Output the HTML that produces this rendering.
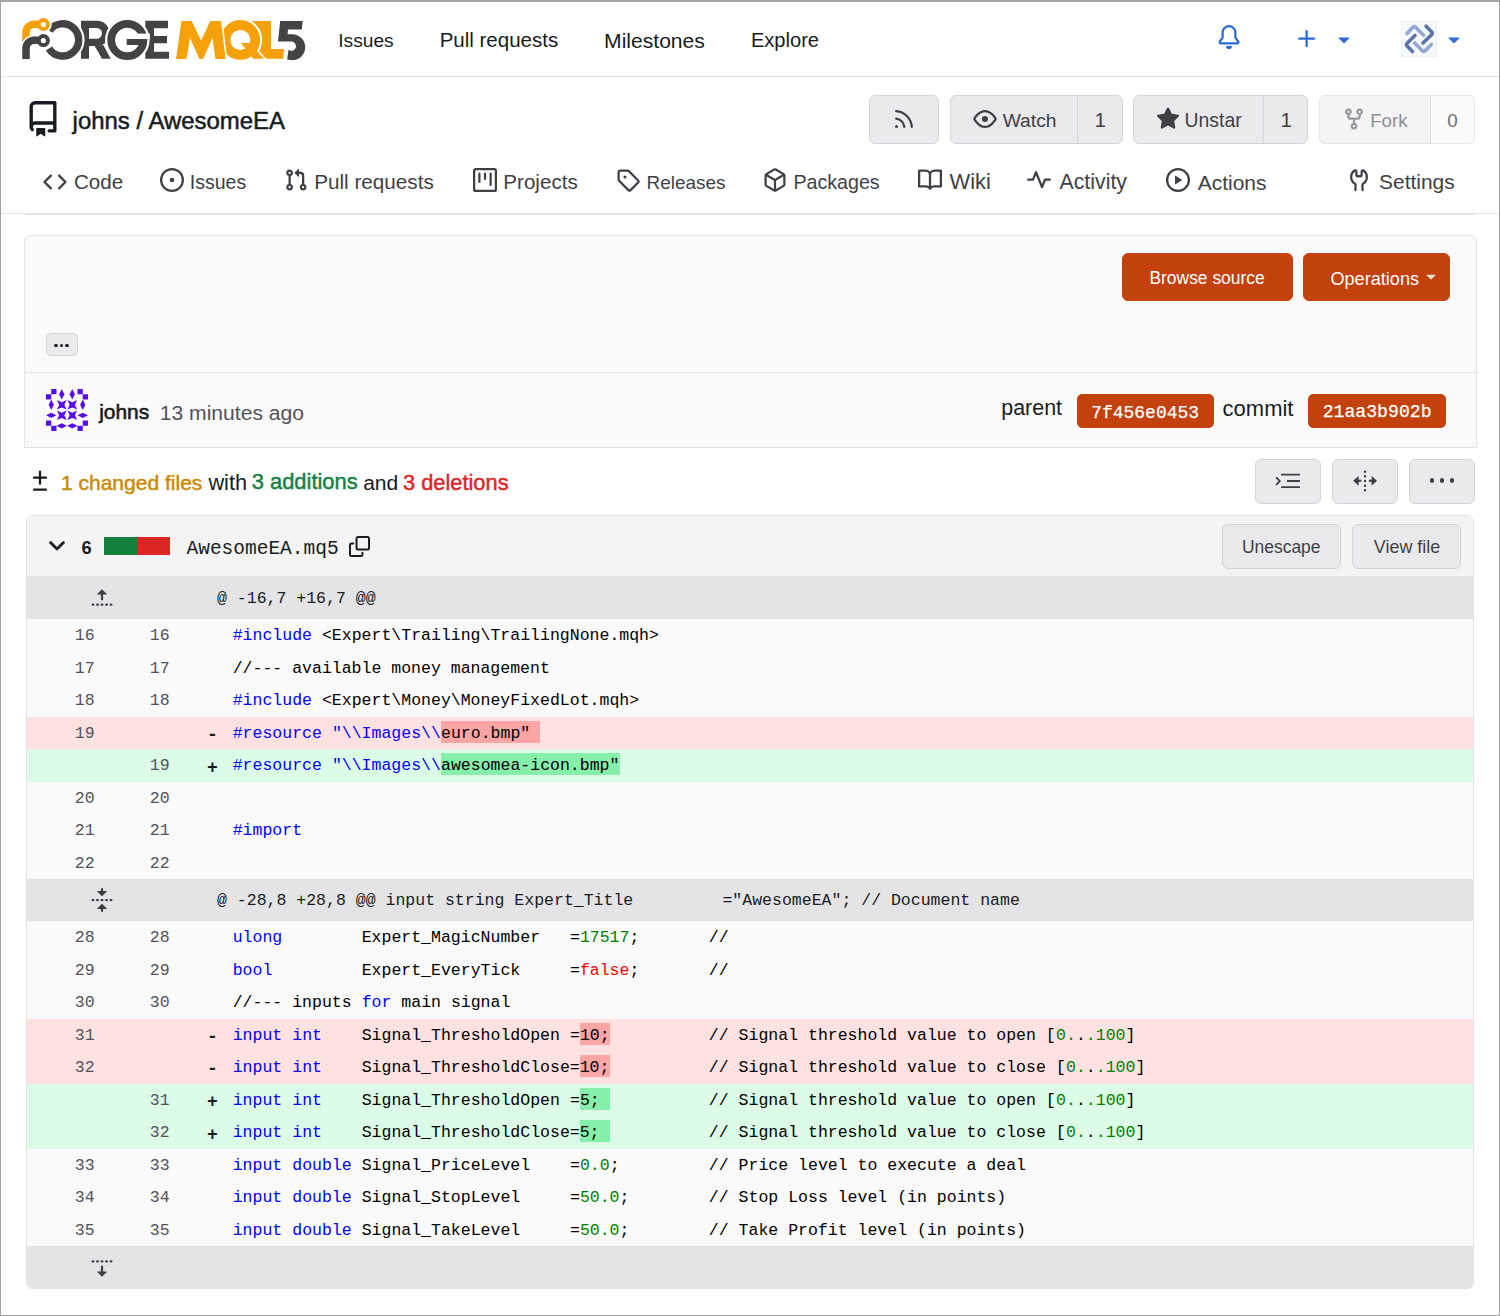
<!DOCTYPE html>
<html><head><meta charset="utf-8"><style>
html,body{margin:0;padding:0;background:#fff;}
body{width:1500px;height:1316px;position:relative;overflow:hidden;font-family:'Liberation Sans', sans-serif;}
.t{position:absolute;white-space:pre;line-height:1;}
</style></head><body>
<div style="position:absolute;left:0px;top:0px;width:1500px;height:1316px;box-sizing:border-box;border:1px solid #a0a0a0;border-top:2px solid #a4a4a4;z-index:50;pointer-events:none"></div>
<div style="position:absolute;left:1px;top:76px;width:1498px;height:1px;background:#e2e2e5"></div>
<svg style="position:absolute;left:0;top:0" width="320" height="76" viewBox="0 0 320 76">
<g fill="#454341">
<path d="M145.3 20.7H168V28.3H154V36H167V43.3H154V51.7H169V58.7H145.3Z"/>
<path d="M81 20.7H97.05A12.65 12.65 0 0 1 97.05 46H89V38.7H96.65A5.35 5.35 0 0 0 96.65 28H89V58.7H81Z"/>
<path d="M94.7 46L103.3 45L110.7 58.7L102 58.7Z"/>
</g>
<circle cx="127.3" cy="40" r="22.3" fill="#fff"/>
<circle cx="127.3" cy="40" r="16.1" fill="none" stroke="#454341" stroke-width="7.8"/>
<rect x="136" y="33.6" width="14" height="5.4" fill="#fff"/>
<rect x="126.7" y="39" width="20" height="6" fill="#454341"/>
<circle cx="62.6" cy="39.9" r="22.0" fill="#fff"/>
<path d="M49.41 30.67 A16.1 16.1 0 1 1 48.95 48.43" fill="none" stroke="#454341" stroke-width="7.4"/>
<circle cx="43.4" cy="24.5" r="8.3" fill="#fff"/>
<circle cx="43.4" cy="40.6" r="8.3" fill="#fff"/>
<path d="M26 44 V32.5 A8.25 8.25 0 0 1 34.25 24.25 H38" fill="none" stroke="#f7a10a" stroke-width="7.5"/>
<circle cx="43.4" cy="24.5" r="4.55" fill="none" stroke="#f7a10a" stroke-width="3.9"/>
<path d="M26 59 V48.5 A8.25 8.25 0 0 1 34.25 40.25 H43.4" fill="none" stroke="#fff" stroke-width="10.5"/>
<path d="M26 59.2 V48.5 A8.25 8.25 0 0 1 34.25 40.25 H38" fill="none" stroke="#454341" stroke-width="7.5"/>
<circle cx="43.4" cy="40.6" r="4.55" fill="none" stroke="#454341" stroke-width="3.9"/>
<rect x="20" y="59.2" width="12" height="4" fill="#fff"/>
<path fill="#f7a10a" d="M260.6 21.1H271V49.1H284L283.3 58.7H250V21.1Z"/>
<circle cx="240.3" cy="39.9" r="21.9" fill="#fff"/>
<path d="M241 43.1L249.8 43.1L264 58.7L253.3 58.7Z" fill="#fff" stroke="#fff" stroke-width="3.2"/>
<circle cx="240.3" cy="39.9" r="14.9" fill="none" stroke="#f7a10a" stroke-width="9.8"/>
<path d="M241 43.1L249.8 43.1L264 58.7L253.3 58.7Z" fill="#f7a10a"/>
<path d="M176.1 59L181.4 21L191.6 21L201.2 40.6L210.3 21L221 21L225.6 59L215.4 59L212.6 37.8L203 59L199.5 59L189.9 37.8L186.5 59Z" fill="#fff" stroke="#fff" stroke-width="3.2"/>
<path d="M176.1 59L181.4 21L191.6 21L201.2 40.6L210.3 21L221 21L225.6 59L215.4 59L212.6 37.8L203 59L199.5 59L189.9 37.8L186.5 59Z" fill="#f7a10a"/>
<path fill="#454341" d="M280.2 21.1L302.7 21.1L301.8 29.5L288.1 29.5L287.5 34.3L292.2 34.3A13 13 0 0 1 292.2 60.3L287.2 59.6L288.5 49.8L291.3 51A4.7 4.7 0 0 0 291.3 41.6L278 41.6Z"/>
<rect x="0" y="60.3" width="320" height="8" fill="#fff"/>
</svg>
<div class="t" style="left:338.27px;top:31.27px;font-size:19.17px;color:#181c21;font-weight:400;font-family:'Liberation Sans', sans-serif;">Issues</div>
<div class="t" style="left:439.66px;top:30.14px;font-size:20.51px;color:#181c21;font-weight:400;font-family:'Liberation Sans', sans-serif;">Pull requests</div>
<div class="t" style="left:604.11px;top:29.64px;font-size:21.09px;color:#181c21;font-weight:400;font-family:'Liberation Sans', sans-serif;">Milestones</div>
<div class="t" style="left:750.89px;top:30.46px;font-size:20.13px;color:#181c21;font-weight:400;font-family:'Liberation Sans', sans-serif;">Explore</div>
<svg style="position:absolute;left:1216.7px;top:24.7px;" width="24" height="24" viewBox="0 0 16 16"><path fill="#2d6bd6" d="M8 16a2 2 0 0 0 1.985-1.75c.017-.137-.097-.25-.235-.25h-3.5c-.138 0-.252.113-.235.25A2 2 0 0 0 8 16ZM3 5a5 5 0 0 1 10 0v2.947c0 .05.015.098.042.139l1.703 2.555A1.519 1.519 0 0 1 13.482 13H2.518a1.516 1.516 0 0 1-1.263-2.36l1.703-2.554A.255.255 0 0 0 3 7.947Zm5-3.5A3.5 3.5 0 0 0 4.5 5v2.947c0 .346-.102.683-.294.97l-1.703 2.556a.017.017 0 0 0-.003.01l.001.006c0 .002.002.004.004.006l.006.004.007.001h10.964l.007-.001.006-.004.004-.006.001-.007a.017.017 0 0 0-.003-.01l-1.703-2.554a1.745 1.745 0 0 1-.294-.97V5A3.5 3.5 0 0 0 8 1.5Z"/></svg>
<svg style="position:absolute;left:1294.6px;top:27px;" width="24" height="24" viewBox="0 0 16 16"><path fill="#2d6bd6" d="M7.75 2a.75.75 0 0 1 .75.75V7h4.25a.75.75 0 0 1 0 1.5H8.5v4.25a.75.75 0 0 1-1.5 0V8.5H2.75a.75.75 0 0 1 0-1.5H7V2.75A.75.75 0 0 1 7.75 2Z"/></svg>
<svg style="position:absolute;left:1332.2px;top:26.5px;" width="24" height="24" viewBox="0 0 16 16"><path fill="#2d6bd6" d="m4.427 7.427 3.396 3.396a.25.25 0 0 0 .354 0l3.396-3.396A.25.25 0 0 0 11.396 7H4.604a.25.25 0 0 0-.177.427Z"/></svg>
<svg style="position:absolute;left:1441.9px;top:26.5px;" width="24" height="24" viewBox="0 0 16 16"><path fill="#2d6bd6" d="m4.427 7.427 3.396 3.396a.25.25 0 0 0 .354 0l3.396-3.396A.25.25 0 0 0 11.396 7H4.604a.25.25 0 0 0-.177.427Z"/></svg>
<svg style="position:absolute;left:1401px;top:21px" width="36" height="36" viewBox="1401 21 36 36">
<rect x="1401.5" y="21.5" width="35" height="35" fill="#f7f8fa" stroke="#eef0f3" stroke-width="1"/>
<g fill="none" stroke-linecap="round" stroke-linejoin="round" stroke-width="3.6">
<path d="M1407 33.5 L1413 27.2 Q1414.3 26 1415.6 27.2 L1423.6 35.2" stroke="#94a8d3"/>
<path d="M1426 26.2 L1431.3 31.5 Q1433 33.3 1431.3 35 L1423 43" stroke="#5a74ae"/>
<path d="M1415 35.5 L1407.3 43 Q1405.8 44.6 1407.3 46.2 L1412.5 51.5" stroke="#5a74ae"/>
<path d="M1414.6 43 L1422.3 50.8 Q1423.7 52.2 1425.1 50.8 L1431.3 44.5" stroke="#94a8d3"/>
</g></svg>
<svg style="position:absolute;left:24.5px;top:100.5px;" width="36" height="36" viewBox="0 0 16 16"><path fill="#181c21" d="M2 2.5A2.5 2.5 0 0 1 4.5 0h8.75a.75.75 0 0 1 .75.75v12.5a.75.75 0 0 1-.75.75h-2.5a.75.75 0 0 1 0-1.5h1.75v-2h-8a1 1 0 0 0-.714 1.7.75.75 0 1 1-1.072 1.05A2.495 2.495 0 0 1 2 11.5Zm10.5-1h-8a1 1 0 0 0-1 1v6.708A2.486 2.486 0 0 1 4.5 9h8ZM5 12.25a.25.25 0 0 1 .25-.25h3.5a.25.25 0 0 1 .25.25v3.25a.25.25 0 0 1-.4.2l-1.45-1.087a.249.249 0 0 0-.3 0L5.4 15.7a.25.25 0 0 1-.4-.2Z"/></svg>
<div class="t" style="left:72.60px;top:109.23px;font-size:23.94px;color:#181c21;font-weight:400;font-family:'Liberation Sans', sans-serif;-webkit-text-stroke:0.5px #181c21;">johns / AwesomeEA</div>
<div style="position:absolute;left:869px;top:95px;width:70px;height:49px;box-sizing:border-box;background:#eaeaed;border:1px solid #d4d4d8;border-radius:6px;"></div>
<svg style="position:absolute;left:891.8px;top:106.8px;" width="24" height="24" viewBox="0 0 16 16"><path fill="#3f3f46" d="M2.002 2.725a.75.75 0 0 1 .797-.699C8.79 2.42 13.58 7.21 13.974 13.201a.75.75 0 0 1-1.497.098 10.502 10.502 0 0 0-9.776-9.776.747.747 0 0 1-.7-.798ZM2.84 7.05h-.002a7.002 7.002 0 0 1 6.113 6.111.75.75 0 0 1-1.49.178 5.503 5.503 0 0 0-4.8-4.8.75.75 0 0 1 .179-1.489ZM2 13a1 1 0 1 1 2 0 1 1 0 0 1-2 0Z"/></svg>
<div style="position:absolute;left:950px;top:95px;width:173px;height:49px;box-sizing:border-box;background:#eaeaed;border:1px solid #d4d4d8;border-radius:6px;"></div>
<div style="position:absolute;left:1077px;top:95px;width:1px;height:49px;background:#d4d4d8"></div>
<svg style="position:absolute;left:972.7px;top:106.7px;" width="24" height="24" viewBox="0 0 16 16"><path fill="#3f3f46" d="M8 2c1.981 0 3.671.992 4.933 2.078 1.27 1.091 2.187 2.345 2.637 3.023a1.62 1.62 0 0 1 0 1.798c-.45.678-1.367 1.932-2.637 3.023C11.67 13.008 9.981 14 8 14c-1.981 0-3.671-.992-4.933-2.078C1.797 10.83.88 9.576.43 8.898a1.62 1.62 0 0 1 0-1.798c.45-.677 1.367-1.931 2.637-3.022C4.33 2.992 6.019 2 8 2ZM1.679 7.932a.12.12 0 0 0 0 .136c.411.622 1.241 1.75 2.366 2.717C5.176 11.758 6.527 12.5 8 12.5c1.473 0 2.825-.742 3.955-1.715 1.124-.967 1.954-2.096 2.366-2.717a.12.12 0 0 0 0-.136c-.412-.621-1.242-1.75-2.366-2.717C10.824 4.242 9.473 3.5 8 3.5c-1.473 0-2.825.742-3.955 1.715-1.124.967-1.954 2.096-2.366 2.717ZM8 10a2 2 0 1 1-.001-3.999A2 2 0 0 1 8 10Z"/></svg>
<div class="t" style="left:1002.70px;top:110.72px;font-size:19.23px;color:#3f3f46;font-weight:400;font-family:'Liberation Sans', sans-serif;">Watch</div>
<div class="t" style="left:1094.46px;top:109.65px;font-size:20.50px;color:#3f3f46;font-weight:400;font-family:'Liberation Sans', sans-serif;">1</div>
<div style="position:absolute;left:1133px;top:95px;width:175px;height:49px;box-sizing:border-box;background:#eaeaed;border:1px solid #d4d4d8;border-radius:6px;"></div>
<div style="position:absolute;left:1263px;top:95px;width:1px;height:49px;background:#d4d4d8"></div>
<svg style="position:absolute;left:1156.2px;top:106.5px;" width="24" height="24" viewBox="0 0 16 16"><path fill="#3f3f46" d="M8 .25a.75.75 0 0 1 .673.418l1.882 3.815 4.21.612a.75.75 0 0 1 .416 1.279l-3.046 2.97.719 4.192a.751.751 0 0 1-1.088.791L8 12.347l-3.766 1.98a.75.75 0 0 1-1.088-.79l.72-4.194L.818 6.374a.75.75 0 0 1 .416-1.28l4.21-.611L7.327.668A.75.75 0 0 1 8 .25Z"/></svg>
<div class="t" style="left:1184.55px;top:110.59px;font-size:19.39px;color:#3f3f46;font-weight:400;font-family:'Liberation Sans', sans-serif;">Unstar</div>
<div class="t" style="left:1280.46px;top:109.65px;font-size:20.50px;color:#3f3f46;font-weight:400;font-family:'Liberation Sans', sans-serif;">1</div>
<div style="position:absolute;left:1319px;top:95px;width:156px;height:49px;box-sizing:border-box;background:#f4f4f5;border:1px solid #e6e6e9;border-radius:6px;"></div>
<div style="position:absolute;left:1431px;top:96px;width:43px;height:47px;background:#fafafa;border-radius:0 5px 5px 0"></div>
<div style="position:absolute;left:1430px;top:95px;width:1px;height:49px;background:#e0e0e3"></div>
<svg style="position:absolute;left:1342.3px;top:106.5px;" width="24" height="24" viewBox="0 0 16 16"><path fill="#98989f" d="M5 5.372v.878c0 .414.336.75.75.75h4.5a.75.75 0 0 0 .75-.75v-.878a2.25 2.25 0 1 1 1.5 0v.878a2.25 2.25 0 0 1-2.25 2.25h-1.5v2.128a2.251 2.251 0 1 1-1.5 0V8.5h-1.5A2.25 2.25 0 0 1 3.5 6.25v-.878a2.25 2.25 0 1 1 1.5 0ZM5 3.25a.75.75 0 1 0-1.5 0 .75.75 0 0 0 1.5 0Zm6.75.75a.75.75 0 1 0 0-1.5.75.75 0 0 0 0 1.5Zm-3 8.75a.75.75 0 1 0-1.5 0 .75.75 0 0 0 1.5 0Z"/></svg>
<div class="t" style="left:1370.20px;top:111.97px;font-size:18.70px;color:#8e8e95;font-weight:400;font-family:'Liberation Sans', sans-serif;">Fork</div>
<div class="t" style="left:1447.24px;top:111.92px;font-size:18.76px;color:#6f6f76;font-weight:400;font-family:'Liberation Sans', sans-serif;">0</div>
<svg style="position:absolute;left:43.3px;top:169.5px;" width="24" height="24" viewBox="0 0 16 16"><path fill="#3f3f46" d="m11.28 3.22 4.25 4.25a.75.75 0 0 1 0 1.06l-4.25 4.25a.749.749 0 0 1-1.275-.326.749.749 0 0 1 .215-.734L13.94 8l-3.72-3.72a.749.749 0 0 1 .326-1.275.749.749 0 0 1 .734.215Zm-6.56 0a.751.751 0 0 1 1.042.018.751.751 0 0 1 .018 1.042L2.06 8l3.72 3.72a.749.749 0 0 1-.326 1.275.749.749 0 0 1-.734-.215L.47 8.53a.75.75 0 0 1 0-1.06Z"/></svg>
<div class="t" style="left:73.97px;top:172.25px;font-size:20.61px;color:#3f3f46;font-weight:400;font-family:'Liberation Sans', sans-serif;">Code</div>
<svg style="position:absolute;left:160px;top:168px;" width="24" height="24" viewBox="0 0 16 16"><path fill="#3f3f46" d="M8 9.5a1.5 1.5 0 1 0 0-3 1.5 1.5 0 0 0 0 3ZM8 0a8 8 0 1 1 0 16A8 8 0 0 1 8 0ZM1.5 8a6.5 6.5 0 1 0 13 0 6.5 6.5 0 0 0-13 0Z"/></svg>
<div class="t" style="left:189.84px;top:173.17px;font-size:19.53px;color:#3f3f46;font-weight:400;font-family:'Liberation Sans', sans-serif;">Issues</div>
<svg style="position:absolute;left:283.5px;top:168px;" width="24" height="24" viewBox="0 0 16 16"><path fill="#3f3f46" d="M1.5 3.25a2.25 2.25 0 1 1 3 2.122v5.256a2.251 2.251 0 1 1-1.5 0V5.372A2.25 2.25 0 0 1 1.5 3.25Zm5.677-.177L9.573.677A.25.25 0 0 1 10 .854V2.5h1A2.5 2.5 0 0 1 13.5 5v5.628a2.251 2.251 0 1 1-1.5 0V5a1 1 0 0 0-1-1h-1v1.646a.25.25 0 0 1-.427.177L7.177 3.427a.25.25 0 0 1 0-.354ZM3.75 2.5a.75.75 0 1 0 0 1.5.75.75 0 0 0 0-1.5Zm0 9.5a.75.75 0 1 0 0 1.5.75.75 0 0 0 0-1.5Zm8.25.75a.75.75 0 1 0 1.5 0 .75.75 0 0 0-1.5 0Z"/></svg>
<div class="t" style="left:314.15px;top:172.19px;font-size:20.69px;color:#3f3f46;font-weight:400;font-family:'Liberation Sans', sans-serif;">Pull requests</div>
<svg style="position:absolute;left:473px;top:168px;" width="24" height="24" viewBox="0 0 16 16"><path fill="#3f3f46" d="M1.75 0h12.5C15.216 0 16 .784 16 1.75v12.5A1.75 1.75 0 0 1 14.25 16H1.75A1.75 1.75 0 0 1 0 14.25V1.75C0 .784.784 0 1.75 0ZM1.5 1.75v12.5c0 .138.112.25.25.25h12.5a.25.25 0 0 0 .25-.25V1.75a.25.25 0 0 0-.25-.25H1.75a.25.25 0 0 0-.25.25ZM11.75 3a.75.75 0 0 1 .75.75v7.5a.75.75 0 0 1-1.5 0v-7.5a.75.75 0 0 1 .75-.75Zm-8.25.75a.75.75 0 0 1 1.5 0v5.5a.75.75 0 0 1-1.5 0ZM8 3a.75.75 0 0 1 .75.75v3.5a.75.75 0 0 1-1.5 0v-3.5A.75.75 0 0 1 8 3Z"/></svg>
<div class="t" style="left:503.35px;top:172.27px;font-size:20.59px;color:#3f3f46;font-weight:400;font-family:'Liberation Sans', sans-serif;">Projects</div>
<svg style="position:absolute;left:616.1px;top:168px;" width="24" height="24" viewBox="0 0 16 16"><path fill="#3f3f46" d="M1 7.775V2.75C1 1.784 1.784 1 2.75 1h5.025c.464 0 .91.184 1.238.513l6.25 6.25a1.75 1.75 0 0 1 0 2.474l-5.026 5.026a1.75 1.75 0 0 1-2.474 0l-6.25-6.25A1.752 1.752 0 0 1 1 7.775Zm1.5 0c0 .066.026.13.073.177l6.25 6.25a.25.25 0 0 0 .354 0l5.025-5.025a.25.25 0 0 0 0-.354l-6.25-6.25a.25.25 0 0 0-.177-.073H2.75a.25.25 0 0 0-.25.25ZM6 5a1 1 0 1 1 0 2 1 1 0 0 1 0-2Z"/></svg>
<div class="t" style="left:646.48px;top:173.66px;font-size:18.94px;color:#3f3f46;font-weight:400;font-family:'Liberation Sans', sans-serif;">Releases</div>
<svg style="position:absolute;left:763.1px;top:168px;" width="24" height="24" viewBox="0 0 16 16"><path fill="#3f3f46" d="m8.878.392 5.25 3.045c.54.314.872.89.872 1.514v6.098a1.75 1.75 0 0 1-.872 1.514l-5.25 3.045a1.75 1.75 0 0 1-1.756 0l-5.25-3.045A1.75 1.75 0 0 1 1 11.049V4.951c0-.624.332-1.201.872-1.514L7.122.392a1.75 1.75 0 0 1 1.756 0ZM7.875 1.69l-4.63 2.685L8 7.133l4.755-2.758-4.63-2.685a.248.248 0 0 0-.25 0ZM2.5 5.677v5.372c0 .09.047.171.125.216l4.625 2.683V8.432Zm6.25 8.271 4.625-2.683a.25.25 0 0 0 .125-.216V5.677L8.75 8.432Z"/></svg>
<div class="t" style="left:793.43px;top:173.07px;font-size:19.64px;color:#3f3f46;font-weight:400;font-family:'Liberation Sans', sans-serif;">Packages</div>
<svg style="position:absolute;left:918px;top:168px;" width="24" height="24" viewBox="0 0 16 16"><path fill="#3f3f46" d="M0 1.75A.75.75 0 0 1 .75 1h4.253c1.227 0 2.317.59 3 1.501A3.743 3.743 0 0 1 11.006 1h4.245a.75.75 0 0 1 .75.75v10.5a.75.75 0 0 1-.75.75h-4.507a2.25 2.25 0 0 0-1.591.659l-.622.621a.75.75 0 0 1-1.06 0l-.622-.621A2.25 2.25 0 0 0 5.258 13H.75a.75.75 0 0 1-.75-.75Zm7.251 10.324.004-5.073-.002-2.253A2.25 2.25 0 0 0 5.003 2.5H1.5v9h3.757a3.75 3.75 0 0 1 1.994.574ZM8.755 4.75l-.004 7.322a3.752 3.752 0 0 1 1.992-.572H14.5v-9h-3.495a2.25 2.25 0 0 0-2.25 2.25Z"/></svg>
<div class="t" style="left:949.50px;top:171.15px;font-size:21.91px;color:#3f3f46;font-weight:400;font-family:'Liberation Sans', sans-serif;">Wiki</div>
<svg style="position:absolute;left:1027px;top:168px;" width="24" height="24" viewBox="0 0 16 16"><path fill="#3f3f46" d="M6 2c.306 0 .582.187.696.471L10 10.731l1.304-3.26A.751.751 0 0 1 12 7h3.25a.75.75 0 0 1 0 1.5h-2.742l-1.812 4.528a.751.751 0 0 1-1.392 0L6 4.77 4.696 8.03A.75.75 0 0 1 4 8.5H.75a.75.75 0 0 1 0-1.5h2.742l1.812-4.529A.751.751 0 0 1 6 2Z"/></svg>
<div class="t" style="left:1059.50px;top:171.66px;font-size:21.31px;color:#3f3f46;font-weight:400;font-family:'Liberation Sans', sans-serif;">Activity</div>
<svg style="position:absolute;left:1166px;top:168px;" width="24" height="24" viewBox="0 0 16 16"><path fill="#3f3f46" d="M8 0a8 8 0 1 1 0 16A8 8 0 0 1 8 0ZM1.5 8a6.5 6.5 0 1 0 13 0 6.5 6.5 0 0 0-13 0Zm4.879-2.773 4.264 2.559a.25.25 0 0 1 0 .428l-4.264 2.559A.25.25 0 0 1 6 10.559V5.442a.25.25 0 0 1 .379-.215Z"/></svg>
<div class="t" style="left:1197.70px;top:171.93px;font-size:20.99px;color:#3f3f46;font-weight:400;font-family:'Liberation Sans', sans-serif;">Actions</div>
<svg style="position:absolute;left:1346.5px;top:168px;" width="24" height="24" viewBox="0 0 16 16"><path fill="#3f3f46" d="M5.433 2.304A4.492 4.492 0 0 0 3.5 6c0 1.598.832 3.002 2.09 3.802.518.328.929.923.902 1.64v.008l-.164 3.337a.75.75 0 1 1-1.498-.073l.163-3.33c.002-.085-.05-.216-.207-.316A5.996 5.996 0 0 1 2 6a5.993 5.993 0 0 1 2.567-4.92 1.482 1.482 0 0 1 .91-.272A1.5 1.5 0 0 1 7 2.3v2.05c0 .138.112.25.25.25h1.5a.25.25 0 0 0 .25-.25V2.3a1.5 1.5 0 0 1 1.523-1.492c.322.007.64.111.91.272A5.993 5.993 0 0 1 14 6a5.996 5.996 0 0 1-2.786 5.068c-.157.1-.21.23-.207.315l.163 3.33a.752.752 0 0 1-1.094.714.75.75 0 0 1-.404-.64l-.164-3.338v-.007c-.027-.718.384-1.312.902-1.64A4.495 4.495 0 0 0 12.5 6a4.492 4.492 0 0 0-1.933-3.696c-.024.017-.067.067-.067.13v2.05A1.75 1.75 0 0 1 8.75 6.25h-1.5A1.75 1.75 0 0 1 5.5 4.5V2.434c0-.064-.043-.114-.067-.13Z"/></svg>
<div class="t" style="left:1379.06px;top:171.97px;font-size:20.94px;color:#3f3f46;font-weight:400;font-family:'Liberation Sans', sans-serif;">Settings</div>
<div style="position:absolute;left:1px;top:213px;width:1498px;height:1px;background:#e8e8eb"></div>
<div style="position:absolute;left:25px;top:213px;width:1450px;height:2px;background:#e2e2e5"></div>
<div style="position:absolute;left:24px;top:235px;width:1453px;height:213px;box-sizing:border-box;background:#fafafa;border:1px solid #e4e4e7;border-radius:6px 6px 0 0"></div>
<div style="position:absolute;left:25px;top:372px;width:1451px;height:1px;background:#e4e4e7"></div>
<div style="position:absolute;left:1122px;top:253px;width:171px;height:48px;box-sizing:border-box;background:#c2410c;border:1px solid #c2410c;border-radius:6px;"></div>
<div class="t" style="left:1149.41px;top:270.14px;font-size:17.44px;color:#fff;font-weight:400;font-family:'Liberation Sans', sans-serif;">Browse source</div>
<div style="position:absolute;left:1303px;top:253px;width:147px;height:48px;box-sizing:border-box;background:#c2410c;border:1px solid #c2410c;border-radius:6px;"></div>
<div class="t" style="left:1330.49px;top:269.58px;font-size:18.10px;color:#fff;font-weight:400;font-family:'Liberation Sans', sans-serif;">Operations</div>
<svg style="position:absolute;left:1420.8px;top:266.2px;opacity:.85" width="20" height="20" viewBox="0 0 16 16"><path fill="#fff" d="m4.427 7.427 3.396 3.396a.25.25 0 0 0 .354 0l3.396-3.396A.25.25 0 0 0 11.396 7H4.604a.25.25 0 0 0-.177.427Z"/></svg>
<div style="position:absolute;left:46px;top:333px;width:32px;height:23px;box-sizing:border-box;background:#eaeaed;border:1px solid #d4d4d8;border-radius:5px;"></div>
<div style="position:absolute;left:54.25px;top:343.55px;width:3.5px;height:3.5px;background:#181c21;border-radius:50%"></div>
<div style="position:absolute;left:59.75px;top:343.55px;width:3.5px;height:3.5px;background:#181c21;border-radius:50%"></div>
<div style="position:absolute;left:65.25px;top:343.55px;width:3.5px;height:3.5px;background:#181c21;border-radius:50%"></div>
<svg style="position:absolute;left:46px;top:389px" width="42" height="42" viewBox="0 0 8 8"><rect width="8" height="8" fill="#fff"/><g fill="#5a0cf0"><rect x="1" y="0" width="1" height="1"/><rect x="0" y="1" width="1" height="1"/><rect x="6" y="0" width="1" height="1"/><rect x="7" y="1" width="1" height="1"/><rect x="0" y="6" width="1" height="1"/><rect x="1" y="7" width="1" height="1"/><rect x="7" y="6" width="1" height="1"/><rect x="6" y="7" width="1" height="1"/><path d="M3 0L3.5 1L3 2L2.5 1Z"/><path d="M5 0L5.5 1L5 2L4.5 1Z"/><path d="M1 2L1.5 3L1 4L0.5 3Z"/><path d="M7 2L7.5 3L7 4L6.5 3Z"/><path d="M0 5L1 4.5L2 5L1 5.5Z"/><path d="M6 5L7 4.5L8 5L7 5.5Z"/><path d="M2 7L3 6.5L4 7L3 7.5Z"/><path d="M4 7L5 6.5L6 7L5 7.5Z"/><path d="M2.080 2.080 L3.000 2.500 L3.920 2.080 L3.500 3.000 L3.920 3.920 L3.000 3.500 L2.080 3.920 L2.500 3.000Z"/><path d="M4.080 2.080 L5.000 2.500 L5.920 2.080 L5.500 3.000 L5.920 3.920 L5.000 3.500 L4.080 3.920 L4.500 3.000Z"/><path d="M2.080 4.080 L3.000 4.500 L3.920 4.080 L3.500 5.000 L3.920 5.920 L3.000 5.500 L2.080 5.920 L2.500 5.000Z"/><path d="M4.080 4.080 L5.000 4.500 L5.920 4.080 L5.500 5.000 L5.920 5.920 L5.000 5.500 L4.080 5.920 L4.500 5.000Z"/></g></svg>
<div class="t" style="left:99.22px;top:401.89px;font-size:20.92px;color:#181c21;font-weight:400;font-family:'Liberation Sans', sans-serif;-webkit-text-stroke:0.6px #181c21;">johns</div>
<div class="t" style="left:159.72px;top:401.53px;font-size:21.11px;color:#52525b;font-weight:400;font-family:'Liberation Sans', sans-serif;">13 minutes ago</div>
<div class="t" style="left:1001.21px;top:398.13px;font-size:21.46px;color:#181c21;font-weight:400;font-family:'Liberation Sans', sans-serif;">parent</div>
<div class="t" style="left:1222.62px;top:397.69px;font-size:21.99px;color:#181c21;font-weight:400;font-family:'Liberation Sans', sans-serif;">commit</div>
<div style="position:absolute;left:1077px;top:394px;width:137px;height:34px;box-sizing:border-box;background:#c2410c;border:1px solid #c2410c;border-radius:5px;"></div>
<div class="t" style="left:1091.15px;top:403.52px;font-size:17.99px;color:#fff;font-weight:400;font-family:'Liberation Mono', monospace;-webkit-text-stroke:0.25px #fff;">7f456e0453</div>
<div style="position:absolute;left:1308px;top:394px;width:138px;height:34px;box-sizing:border-box;background:#c2410c;border:1px solid #c2410c;border-radius:5px;"></div>
<div class="t" style="left:1322.63px;top:403.39px;font-size:18.16px;color:#fff;font-weight:400;font-family:'Liberation Mono', monospace;-webkit-text-stroke:0.25px #fff;">21aa3b902b</div>
<svg style="position:absolute;left:27.6px;top:469.3px;" width="24" height="24" viewBox="0 0 16 16"><path fill="#181c21" d="M8.75 1.75V5H12a.75.75 0 0 1 0 1.5H8.75v3.25a.75.75 0 0 1-1.5 0V6.5H4A.75.75 0 0 1 4 5h3.25V1.75a.75.75 0 0 1 1.5 0ZM4 13h8a.75.75 0 0 1 0 1.5H4A.75.75 0 0 1 4 13Z"/></svg>
<div class="t" style="left:60.92px;top:472.19px;font-size:21.04px;color:#ca8a04;font-weight:400;font-family:'Liberation Sans', sans-serif;-webkit-text-stroke:0.45px #ca8a04;">1 changed files</div>
<div class="t" style="left:208.41px;top:471.57px;font-size:21.77px;color:#181c21;font-weight:400;font-family:'Liberation Sans', sans-serif;">with</div>
<div class="t" style="left:251.73px;top:471.44px;font-size:21.92px;color:#15803d;font-weight:400;font-family:'Liberation Sans', sans-serif;-webkit-text-stroke:0.45px #15803d;">3 additions</div>
<div class="t" style="left:363.16px;top:472.18px;font-size:21.06px;color:#181c21;font-weight:400;font-family:'Liberation Sans', sans-serif;">and</div>
<div class="t" style="left:403.04px;top:471.53px;font-size:21.82px;color:#dc2626;font-weight:400;font-family:'Liberation Sans', sans-serif;-webkit-text-stroke:0.45px #dc2626;">3 deletions</div>
<div style="position:absolute;left:1255px;top:459px;width:66px;height:45px;box-sizing:border-box;background:#eaeaed;border:1px solid #d4d4d8;border-radius:6px;"></div>
<div style="position:absolute;left:1332px;top:459px;width:66px;height:45px;box-sizing:border-box;background:#eaeaed;border:1px solid #d4d4d8;border-radius:6px;"></div>
<div style="position:absolute;left:1409px;top:459px;width:66px;height:45px;box-sizing:border-box;background:#eaeaed;border:1px solid #d4d4d8;border-radius:6px;"></div>
<svg style="position:absolute;left:1270px;top:466px" width="36" height="30" viewBox="1270 466 36 30">
<path d="M1276.6 477.8 L1279.9 481.1 L1276.6 484.4" fill="none" stroke="#3f3f46" stroke-width="1.8" stroke-linecap="round" stroke-linejoin="round"/>
<rect x="1281" y="473.7" width="19" height="1.9" rx=".5" fill="#3f3f46"/>
<rect x="1287" y="480" width="13" height="1.9" rx=".5" fill="#3f3f46"/>
<rect x="1281" y="486.2" width="19" height="1.9" rx=".5" fill="#3f3f46"/>
</svg>
<svg style="position:absolute;left:1348px;top:466px" width="36" height="30" viewBox="1348 466 36 30">
<g fill="#3f3f46">
<rect x="1363.9" y="470.4" width="2.2" height="2.6" rx="1"/><rect x="1363.9" y="475" width="2.2" height="2.6" rx="1"/><rect x="1363.9" y="479.7" width="2.2" height="2.6" rx="1"/><rect x="1363.9" y="484.4" width="2.2" height="2.6" rx="1"/><rect x="1363.9" y="489" width="2.2" height="2.6" rx="1"/>
<path d="M1353.2 480.8 L1358.6 475.9 V485.7 Z"/><rect x="1358" y="479.7" width="3.3" height="2.2"/>
<path d="M1377 480.8 L1371.6 475.9 V485.7 Z"/><rect x="1368.9" y="479.7" width="3.3" height="2.2"/>
</g></svg>
<div style="position:absolute;left:1429.6px;top:478.3px;width:4.4px;height:4.4px;background:#3f3f46;border-radius:50%"></div>
<div style="position:absolute;left:1439.8px;top:478.3px;width:4.4px;height:4.4px;background:#3f3f46;border-radius:50%"></div>
<div style="position:absolute;left:1450.0px;top:478.3px;width:4.4px;height:4.4px;background:#3f3f46;border-radius:50%"></div>
<div style="position:absolute;left:26px;top:515px;width:1448px;height:774px;box-sizing:border-box;background:#fafafa;border:1px solid #e4e4e7;border-radius:6px;overflow:hidden"></div>
<div style="position:absolute;left:27px;top:516px;width:1446px;height:60px;background:#f4f4f5;border-radius:5px 5px 0 0"></div>
<svg style="position:absolute;left:45.3px;top:534.3px" width="24" height="24" viewBox="0 0 16 16"><path fill="#181c21" stroke="#181c21" stroke-width="0.5" d="M12.78 5.22a.749.749 0 0 1 0 1.06l-4.25 4.25a.749.749 0 0 1-1.06 0L3.22 6.28a.749.749 0 0 1 .326-1.275.749.749 0 0 1 .734.215L8 8.94l3.72-3.72a.749.749 0 0 1 1.06 0Z"/></svg>
<div class="t" style="left:81.56px;top:538.51px;font-size:18.30px;color:#181c21;font-weight:700;font-family:'Liberation Sans', sans-serif;">6</div>
<div style="position:absolute;left:104px;top:537px;width:33px;height:18px;background:#15803d"></div>
<div style="position:absolute;left:137px;top:537px;width:33px;height:18px;background:#dc2626"></div>
<div class="t" style="left:186.50px;top:539.55px;font-size:19.51px;color:#181c21;font-weight:400;font-family:'Liberation Mono', monospace;">AwesomeEA.mq5</div>
<svg style="position:absolute;left:349px;top:536.3px;" width="21" height="21" viewBox="0 0 16 16"><path fill="#181c21" d="M0 6.75C0 5.784.784 5 1.75 5h1.5a.75.75 0 0 1 0 1.5h-1.5a.25.25 0 0 0-.25.25v7.5c0 .138.112.25.25.25h7.5a.25.25 0 0 0 .25-.25v-1.5a.75.75 0 0 1 1.5 0v1.5A1.75 1.75 0 0 1 9.25 16h-7.5A1.75 1.75 0 0 1 0 14.25ZM5 1.75C5 .784 5.784 0 6.75 0h7.5C15.216 0 16 .784 16 1.75v7.5A1.75 1.75 0 0 1 14.25 11h-7.5A1.75 1.75 0 0 1 5 9.25Zm1.75-.25a.25.25 0 0 0-.25.25v7.5c0 .138.112.25.25.25h7.5a.25.25 0 0 0 .25-.25v-7.5a.25.25 0 0 0-.25-.25Z"/></svg>
<div style="position:absolute;left:1222px;top:524px;width:119px;height:45px;box-sizing:border-box;background:#eaeaed;border:1px solid #d4d4d8;border-radius:6px;"></div>
<div class="t" style="left:1241.99px;top:539.24px;font-size:17.44px;color:#3f3f46;font-weight:400;font-family:'Liberation Sans', sans-serif;">Unescape</div>
<div style="position:absolute;left:1352px;top:524px;width:109px;height:45px;box-sizing:border-box;background:#eaeaed;border:1px solid #d4d4d8;border-radius:6px;"></div>
<div class="t" style="left:1373.80px;top:538.82px;font-size:17.93px;color:#3f3f46;font-weight:400;font-family:'Liberation Sans', sans-serif;">View file</div>
<div style="position:absolute;left:27px;top:576px;width:1446px;height:43px;background:#e4e4e7"></div>
<svg style="position:absolute;left:90.2px;top:586.6px;" width="24" height="24" viewBox="0 0 16 16"><path fill="#3f3f46" d="M7.823 1.677 4.927 4.573A.25.25 0 0 0 5.104 5H7.25v3.236a.75.75 0 1 0 1.5 0V5h2.146a.25.25 0 0 0 .177-.427L8.177 1.677a.25.25 0 0 0-.354 0ZM13.75 11a.75.75 0 0 0 0 1.5h.5a.75.75 0 0 0 0-1.5h-.5Zm-3.75.75a.75.75 0 0 1 .75-.75h.5a.75.75 0 0 1 0 1.5h-.5a.75.75 0 0 1-.75-.75ZM7.75 11a.75.75 0 0 0 0 1.5h.5a.75.75 0 0 0 0-1.5h-.5ZM4 11.75a.75.75 0 0 1 .75-.75h.5a.75.75 0 0 1 0 1.5h-.5a.75.75 0 0 1-.75-.75ZM1.75 11a.75.75 0 0 0 0 1.5h.5a.75.75 0 0 0 0-1.5h-.5Z"/></svg>
<div class="t" style="left:217.00px;top:591.33px;font-size:16.53px;color:#181c21;font-weight:400;font-family:'Liberation Mono', monospace;">@ -16,7 +16,7 @@</div>
<div class="t" style="left:74.80px;top:628.13px;font-size:16.53px;color:#52525b;font-weight:400;font-family:'Liberation Mono', monospace;">16</div>
<div class="t" style="left:149.80px;top:628.13px;font-size:16.53px;color:#52525b;font-weight:400;font-family:'Liberation Mono', monospace;">16</div>
<div class="t" style="left:232.70px;top:628.13px;font-size:16.53px;color:#0000ff;font-weight:400;font-family:'Liberation Mono', monospace;">#include</div>
<div class="t" style="left:312.06px;top:628.13px;font-size:16.53px;color:#000000;font-weight:400;font-family:'Liberation Mono', monospace;"> &lt;Expert\Trailing\TrailingNone.mqh&gt;</div>
<div class="t" style="left:74.80px;top:660.63px;font-size:16.53px;color:#52525b;font-weight:400;font-family:'Liberation Mono', monospace;">17</div>
<div class="t" style="left:149.80px;top:660.63px;font-size:16.53px;color:#52525b;font-weight:400;font-family:'Liberation Mono', monospace;">17</div>
<div class="t" style="left:232.70px;top:660.63px;font-size:16.53px;color:#000000;font-weight:400;font-family:'Liberation Mono', monospace;">//--- available money management</div>
<div class="t" style="left:74.80px;top:693.13px;font-size:16.53px;color:#52525b;font-weight:400;font-family:'Liberation Mono', monospace;">18</div>
<div class="t" style="left:149.80px;top:693.13px;font-size:16.53px;color:#52525b;font-weight:400;font-family:'Liberation Mono', monospace;">18</div>
<div class="t" style="left:232.70px;top:693.13px;font-size:16.53px;color:#0000ff;font-weight:400;font-family:'Liberation Mono', monospace;">#include</div>
<div class="t" style="left:312.06px;top:693.13px;font-size:16.53px;color:#000000;font-weight:400;font-family:'Liberation Mono', monospace;"> &lt;Expert\Money\MoneyFixedLot.mqh&gt;</div>
<div style="position:absolute;left:27px;top:716.5px;width:1446px;height:32.5px;background:#fee2e2"></div>
<div style="position:absolute;left:441.02px;top:720.5px;width:99.2px;height:22px;background:#fca5a5"></div>
<div class="t" style="left:74.80px;top:725.63px;font-size:16.53px;color:#52525b;font-weight:400;font-family:'Liberation Mono', monospace;">19</div>
<div class="t" style="left:207.00px;top:725.71px;font-size:18.00px;color:#181c21;font-weight:700;font-family:'Liberation Mono', monospace;">-</div>
<div class="t" style="left:232.70px;top:725.63px;font-size:16.53px;color:#0000ff;font-weight:400;font-family:'Liberation Mono', monospace;">#resource</div>
<div class="t" style="left:331.90px;top:725.63px;font-size:16.53px;color:#0000ff;font-weight:400;font-family:'Liberation Mono', monospace;">&quot;\\Images\\</div>
<div class="t" style="left:441.02px;top:725.63px;font-size:16.53px;color:#000000;font-weight:400;font-family:'Liberation Mono', monospace;">euro.bmp&quot;</div>
<div style="position:absolute;left:27px;top:749.0px;width:1446px;height:32.5px;background:#dcfce7"></div>
<div style="position:absolute;left:441.02px;top:753.0px;width:178.56px;height:22px;background:#86efac"></div>
<div class="t" style="left:149.80px;top:758.13px;font-size:16.53px;color:#52525b;font-weight:400;font-family:'Liberation Mono', monospace;">19</div>
<div class="t" style="left:207.00px;top:758.61px;font-size:18.00px;color:#181c21;font-weight:700;font-family:'Liberation Mono', monospace;">+</div>
<div class="t" style="left:232.70px;top:758.13px;font-size:16.53px;color:#0000ff;font-weight:400;font-family:'Liberation Mono', monospace;">#resource</div>
<div class="t" style="left:331.90px;top:758.13px;font-size:16.53px;color:#0000ff;font-weight:400;font-family:'Liberation Mono', monospace;">&quot;\\Images\\</div>
<div class="t" style="left:441.02px;top:758.13px;font-size:16.53px;color:#000000;font-weight:400;font-family:'Liberation Mono', monospace;">awesomea-icon.bmp&quot;</div>
<div class="t" style="left:74.80px;top:790.63px;font-size:16.53px;color:#52525b;font-weight:400;font-family:'Liberation Mono', monospace;">20</div>
<div class="t" style="left:149.80px;top:790.63px;font-size:16.53px;color:#52525b;font-weight:400;font-family:'Liberation Mono', monospace;">20</div>
<div class="t" style="left:74.80px;top:823.13px;font-size:16.53px;color:#52525b;font-weight:400;font-family:'Liberation Mono', monospace;">21</div>
<div class="t" style="left:149.80px;top:823.13px;font-size:16.53px;color:#52525b;font-weight:400;font-family:'Liberation Mono', monospace;">21</div>
<div class="t" style="left:232.70px;top:823.13px;font-size:16.53px;color:#0000ff;font-weight:400;font-family:'Liberation Mono', monospace;">#import</div>
<div class="t" style="left:74.80px;top:855.63px;font-size:16.53px;color:#52525b;font-weight:400;font-family:'Liberation Mono', monospace;">22</div>
<div class="t" style="left:149.80px;top:855.63px;font-size:16.53px;color:#52525b;font-weight:400;font-family:'Liberation Mono', monospace;">22</div>
<div style="position:absolute;left:27px;top:879px;width:1446px;height:42px;background:#e4e4e7"></div>
<svg style="position:absolute;left:90.2px;top:887.5px;" width="24" height="24" viewBox="0 0 16 16"><path fill="#3f3f46" d="M10.896 2H8.75V.75a.75.75 0 0 0-1.5 0V2H5.104a.25.25 0 0 0-.177.427l2.896 2.896a.25.25 0 0 0 .354 0l2.896-2.896A.25.25 0 0 0 10.896 2ZM8.75 15.25a.75.75 0 0 1-1.5 0V14H5.104a.25.25 0 0 1-.177-.427l2.896-2.896a.25.25 0 0 1 .354 0l2.896 2.896a.25.25 0 0 1-.177.427H8.75v1.25Zm-6.5-6.5a.75.75 0 0 0 0-1.5h-.5a.75.75 0 0 0 0 1.5h.5ZM6 8a.75.75 0 0 1-.75.75h-.5a.75.75 0 0 1 0-1.5h.5A.75.75 0 0 1 6 8Zm2.25.75a.75.75 0 0 0 0-1.5h-.5a.75.75 0 0 0 0 1.5h.5ZM12 8a.75.75 0 0 1-.75.75h-.5a.75.75 0 0 1 0-1.5h.5A.75.75 0 0 1 12 8Zm2.25.75a.75.75 0 0 0 0-1.5h-.5a.75.75 0 0 0 0 1.5h.5Z"/></svg>
<div class="t" style="left:217.00px;top:893.33px;font-size:16.53px;color:#181c21;font-weight:400;font-family:'Liberation Mono', monospace;">@ -28,8 +28,8 @@ input string Expert_Title         =&quot;AwesomeEA&quot;; // Document name</div>
<div class="t" style="left:74.80px;top:930.13px;font-size:16.53px;color:#52525b;font-weight:400;font-family:'Liberation Mono', monospace;">28</div>
<div class="t" style="left:149.80px;top:930.13px;font-size:16.53px;color:#52525b;font-weight:400;font-family:'Liberation Mono', monospace;">28</div>
<div class="t" style="left:232.70px;top:930.13px;font-size:16.53px;color:#0000ff;font-weight:400;font-family:'Liberation Mono', monospace;">ulong</div>
<div class="t" style="left:361.66px;top:930.13px;font-size:16.53px;color:#000000;font-weight:400;font-family:'Liberation Mono', monospace;">Expert_MagicNumber</div>
<div class="t" style="left:569.98px;top:930.13px;font-size:16.53px;color:#000000;font-weight:400;font-family:'Liberation Mono', monospace;">=</div>
<div class="t" style="left:579.90px;top:930.13px;font-size:16.53px;color:#008000;font-weight:400;font-family:'Liberation Mono', monospace;">17517</div>
<div class="t" style="left:629.50px;top:930.13px;font-size:16.53px;color:#000000;font-weight:400;font-family:'Liberation Mono', monospace;">;</div>
<div class="t" style="left:708.86px;top:930.13px;font-size:16.53px;color:#000000;font-weight:400;font-family:'Liberation Mono', monospace;">//</div>
<div class="t" style="left:74.80px;top:962.63px;font-size:16.53px;color:#52525b;font-weight:400;font-family:'Liberation Mono', monospace;">29</div>
<div class="t" style="left:149.80px;top:962.63px;font-size:16.53px;color:#52525b;font-weight:400;font-family:'Liberation Mono', monospace;">29</div>
<div class="t" style="left:232.70px;top:962.63px;font-size:16.53px;color:#0000ff;font-weight:400;font-family:'Liberation Mono', monospace;">bool</div>
<div class="t" style="left:361.66px;top:962.63px;font-size:16.53px;color:#000000;font-weight:400;font-family:'Liberation Mono', monospace;">Expert_EveryTick</div>
<div class="t" style="left:569.98px;top:962.63px;font-size:16.53px;color:#000000;font-weight:400;font-family:'Liberation Mono', monospace;">=</div>
<div class="t" style="left:579.90px;top:962.63px;font-size:16.53px;color:#ff0000;font-weight:400;font-family:'Liberation Mono', monospace;">false</div>
<div class="t" style="left:629.50px;top:962.63px;font-size:16.53px;color:#000000;font-weight:400;font-family:'Liberation Mono', monospace;">;</div>
<div class="t" style="left:708.86px;top:962.63px;font-size:16.53px;color:#000000;font-weight:400;font-family:'Liberation Mono', monospace;">//</div>
<div class="t" style="left:74.80px;top:995.13px;font-size:16.53px;color:#52525b;font-weight:400;font-family:'Liberation Mono', monospace;">30</div>
<div class="t" style="left:149.80px;top:995.13px;font-size:16.53px;color:#52525b;font-weight:400;font-family:'Liberation Mono', monospace;">30</div>
<div class="t" style="left:232.70px;top:995.13px;font-size:16.53px;color:#000000;font-weight:400;font-family:'Liberation Mono', monospace;">//--- inputs</div>
<div class="t" style="left:361.66px;top:995.13px;font-size:16.53px;color:#0000ff;font-weight:400;font-family:'Liberation Mono', monospace;">for</div>
<div class="t" style="left:401.34px;top:995.13px;font-size:16.53px;color:#000000;font-weight:400;font-family:'Liberation Mono', monospace;">main signal</div>
<div style="position:absolute;left:27px;top:1018.5px;width:1446px;height:32.5px;background:#fee2e2"></div>
<div style="position:absolute;left:579.9px;top:1022.5px;width:29.759999999999998px;height:22px;background:#fca5a5"></div>
<div class="t" style="left:74.80px;top:1027.63px;font-size:16.53px;color:#52525b;font-weight:400;font-family:'Liberation Mono', monospace;">31</div>
<div class="t" style="left:207.00px;top:1027.71px;font-size:18.00px;color:#181c21;font-weight:700;font-family:'Liberation Mono', monospace;">-</div>
<div class="t" style="left:232.70px;top:1027.63px;font-size:16.53px;color:#0000ff;font-weight:400;font-family:'Liberation Mono', monospace;">input</div>
<div class="t" style="left:292.22px;top:1027.63px;font-size:16.53px;color:#0000ff;font-weight:400;font-family:'Liberation Mono', monospace;">int</div>
<div class="t" style="left:361.66px;top:1027.63px;font-size:16.53px;color:#000000;font-weight:400;font-family:'Liberation Mono', monospace;">Signal_ThresholdOpen</div>
<div class="t" style="left:569.98px;top:1027.63px;font-size:16.53px;color:#000000;font-weight:400;font-family:'Liberation Mono', monospace;">=10;</div>
<div class="t" style="left:708.86px;top:1027.63px;font-size:16.53px;color:#000000;font-weight:400;font-family:'Liberation Mono', monospace;">// Signal threshold value to open [</div>
<div class="t" style="left:1056.06px;top:1027.63px;font-size:16.53px;color:#008000;font-weight:400;font-family:'Liberation Mono', monospace;">0.</div>
<div class="t" style="left:1075.90px;top:1027.63px;font-size:16.53px;color:#000000;font-weight:400;font-family:'Liberation Mono', monospace;">.</div>
<div class="t" style="left:1085.82px;top:1027.63px;font-size:16.53px;color:#008000;font-weight:400;font-family:'Liberation Mono', monospace;">.100</div>
<div class="t" style="left:1125.50px;top:1027.63px;font-size:16.53px;color:#000000;font-weight:400;font-family:'Liberation Mono', monospace;">]</div>
<div style="position:absolute;left:27px;top:1051.0px;width:1446px;height:32.5px;background:#fee2e2"></div>
<div style="position:absolute;left:579.9px;top:1055.0px;width:29.759999999999998px;height:22px;background:#fca5a5"></div>
<div class="t" style="left:74.80px;top:1060.13px;font-size:16.53px;color:#52525b;font-weight:400;font-family:'Liberation Mono', monospace;">32</div>
<div class="t" style="left:207.00px;top:1060.21px;font-size:18.00px;color:#181c21;font-weight:700;font-family:'Liberation Mono', monospace;">-</div>
<div class="t" style="left:232.70px;top:1060.13px;font-size:16.53px;color:#0000ff;font-weight:400;font-family:'Liberation Mono', monospace;">input</div>
<div class="t" style="left:292.22px;top:1060.13px;font-size:16.53px;color:#0000ff;font-weight:400;font-family:'Liberation Mono', monospace;">int</div>
<div class="t" style="left:361.66px;top:1060.13px;font-size:16.53px;color:#000000;font-weight:400;font-family:'Liberation Mono', monospace;">Signal_ThresholdClose=10;</div>
<div class="t" style="left:708.86px;top:1060.13px;font-size:16.53px;color:#000000;font-weight:400;font-family:'Liberation Mono', monospace;">// Signal threshold value to close [</div>
<div class="t" style="left:1065.98px;top:1060.13px;font-size:16.53px;color:#008000;font-weight:400;font-family:'Liberation Mono', monospace;">0.</div>
<div class="t" style="left:1085.82px;top:1060.13px;font-size:16.53px;color:#000000;font-weight:400;font-family:'Liberation Mono', monospace;">.</div>
<div class="t" style="left:1095.74px;top:1060.13px;font-size:16.53px;color:#008000;font-weight:400;font-family:'Liberation Mono', monospace;">.100</div>
<div class="t" style="left:1135.42px;top:1060.13px;font-size:16.53px;color:#000000;font-weight:400;font-family:'Liberation Mono', monospace;">]</div>
<div style="position:absolute;left:27px;top:1083.5px;width:1446px;height:32.5px;background:#dcfce7"></div>
<div style="position:absolute;left:579.9px;top:1087.5px;width:29.759999999999998px;height:22px;background:#86efac"></div>
<div class="t" style="left:149.80px;top:1092.63px;font-size:16.53px;color:#52525b;font-weight:400;font-family:'Liberation Mono', monospace;">31</div>
<div class="t" style="left:207.00px;top:1093.11px;font-size:18.00px;color:#181c21;font-weight:700;font-family:'Liberation Mono', monospace;">+</div>
<div class="t" style="left:232.70px;top:1092.63px;font-size:16.53px;color:#0000ff;font-weight:400;font-family:'Liberation Mono', monospace;">input</div>
<div class="t" style="left:292.22px;top:1092.63px;font-size:16.53px;color:#0000ff;font-weight:400;font-family:'Liberation Mono', monospace;">int</div>
<div class="t" style="left:361.66px;top:1092.63px;font-size:16.53px;color:#000000;font-weight:400;font-family:'Liberation Mono', monospace;">Signal_ThresholdOpen</div>
<div class="t" style="left:569.98px;top:1092.63px;font-size:16.53px;color:#000000;font-weight:400;font-family:'Liberation Mono', monospace;">=5;</div>
<div class="t" style="left:708.86px;top:1092.63px;font-size:16.53px;color:#000000;font-weight:400;font-family:'Liberation Mono', monospace;">// Signal threshold value to open [</div>
<div class="t" style="left:1056.06px;top:1092.63px;font-size:16.53px;color:#008000;font-weight:400;font-family:'Liberation Mono', monospace;">0.</div>
<div class="t" style="left:1075.90px;top:1092.63px;font-size:16.53px;color:#000000;font-weight:400;font-family:'Liberation Mono', monospace;">.</div>
<div class="t" style="left:1085.82px;top:1092.63px;font-size:16.53px;color:#008000;font-weight:400;font-family:'Liberation Mono', monospace;">.100</div>
<div class="t" style="left:1125.50px;top:1092.63px;font-size:16.53px;color:#000000;font-weight:400;font-family:'Liberation Mono', monospace;">]</div>
<div style="position:absolute;left:27px;top:1116.0px;width:1446px;height:32.5px;background:#dcfce7"></div>
<div style="position:absolute;left:579.9px;top:1120.0px;width:29.759999999999998px;height:22px;background:#86efac"></div>
<div class="t" style="left:149.80px;top:1125.13px;font-size:16.53px;color:#52525b;font-weight:400;font-family:'Liberation Mono', monospace;">32</div>
<div class="t" style="left:207.00px;top:1125.61px;font-size:18.00px;color:#181c21;font-weight:700;font-family:'Liberation Mono', monospace;">+</div>
<div class="t" style="left:232.70px;top:1125.13px;font-size:16.53px;color:#0000ff;font-weight:400;font-family:'Liberation Mono', monospace;">input</div>
<div class="t" style="left:292.22px;top:1125.13px;font-size:16.53px;color:#0000ff;font-weight:400;font-family:'Liberation Mono', monospace;">int</div>
<div class="t" style="left:361.66px;top:1125.13px;font-size:16.53px;color:#000000;font-weight:400;font-family:'Liberation Mono', monospace;">Signal_ThresholdClose=5;</div>
<div class="t" style="left:708.86px;top:1125.13px;font-size:16.53px;color:#000000;font-weight:400;font-family:'Liberation Mono', monospace;">// Signal threshold value to close [</div>
<div class="t" style="left:1065.98px;top:1125.13px;font-size:16.53px;color:#008000;font-weight:400;font-family:'Liberation Mono', monospace;">0.</div>
<div class="t" style="left:1085.82px;top:1125.13px;font-size:16.53px;color:#000000;font-weight:400;font-family:'Liberation Mono', monospace;">.</div>
<div class="t" style="left:1095.74px;top:1125.13px;font-size:16.53px;color:#008000;font-weight:400;font-family:'Liberation Mono', monospace;">.100</div>
<div class="t" style="left:1135.42px;top:1125.13px;font-size:16.53px;color:#000000;font-weight:400;font-family:'Liberation Mono', monospace;">]</div>
<div class="t" style="left:74.80px;top:1157.63px;font-size:16.53px;color:#52525b;font-weight:400;font-family:'Liberation Mono', monospace;">33</div>
<div class="t" style="left:149.80px;top:1157.63px;font-size:16.53px;color:#52525b;font-weight:400;font-family:'Liberation Mono', monospace;">33</div>
<div class="t" style="left:232.70px;top:1157.63px;font-size:16.53px;color:#0000ff;font-weight:400;font-family:'Liberation Mono', monospace;">input</div>
<div class="t" style="left:292.22px;top:1157.63px;font-size:16.53px;color:#0000ff;font-weight:400;font-family:'Liberation Mono', monospace;">double</div>
<div class="t" style="left:361.66px;top:1157.63px;font-size:16.53px;color:#000000;font-weight:400;font-family:'Liberation Mono', monospace;">Signal_PriceLevel</div>
<div class="t" style="left:569.98px;top:1157.63px;font-size:16.53px;color:#000000;font-weight:400;font-family:'Liberation Mono', monospace;">=</div>
<div class="t" style="left:579.90px;top:1157.63px;font-size:16.53px;color:#008000;font-weight:400;font-family:'Liberation Mono', monospace;">0.0</div>
<div class="t" style="left:609.66px;top:1157.63px;font-size:16.53px;color:#000000;font-weight:400;font-family:'Liberation Mono', monospace;">;</div>
<div class="t" style="left:708.86px;top:1157.63px;font-size:16.53px;color:#000000;font-weight:400;font-family:'Liberation Mono', monospace;">// Price level to execute a deal</div>
<div class="t" style="left:74.80px;top:1190.13px;font-size:16.53px;color:#52525b;font-weight:400;font-family:'Liberation Mono', monospace;">34</div>
<div class="t" style="left:149.80px;top:1190.13px;font-size:16.53px;color:#52525b;font-weight:400;font-family:'Liberation Mono', monospace;">34</div>
<div class="t" style="left:232.70px;top:1190.13px;font-size:16.53px;color:#0000ff;font-weight:400;font-family:'Liberation Mono', monospace;">input</div>
<div class="t" style="left:292.22px;top:1190.13px;font-size:16.53px;color:#0000ff;font-weight:400;font-family:'Liberation Mono', monospace;">double</div>
<div class="t" style="left:361.66px;top:1190.13px;font-size:16.53px;color:#000000;font-weight:400;font-family:'Liberation Mono', monospace;">Signal_StopLevel</div>
<div class="t" style="left:569.98px;top:1190.13px;font-size:16.53px;color:#000000;font-weight:400;font-family:'Liberation Mono', monospace;">=</div>
<div class="t" style="left:579.90px;top:1190.13px;font-size:16.53px;color:#008000;font-weight:400;font-family:'Liberation Mono', monospace;">50.0</div>
<div class="t" style="left:619.58px;top:1190.13px;font-size:16.53px;color:#000000;font-weight:400;font-family:'Liberation Mono', monospace;">;</div>
<div class="t" style="left:708.86px;top:1190.13px;font-size:16.53px;color:#000000;font-weight:400;font-family:'Liberation Mono', monospace;">// Stop Loss level (in points)</div>
<div class="t" style="left:74.80px;top:1222.63px;font-size:16.53px;color:#52525b;font-weight:400;font-family:'Liberation Mono', monospace;">35</div>
<div class="t" style="left:149.80px;top:1222.63px;font-size:16.53px;color:#52525b;font-weight:400;font-family:'Liberation Mono', monospace;">35</div>
<div class="t" style="left:232.70px;top:1222.63px;font-size:16.53px;color:#0000ff;font-weight:400;font-family:'Liberation Mono', monospace;">input</div>
<div class="t" style="left:292.22px;top:1222.63px;font-size:16.53px;color:#0000ff;font-weight:400;font-family:'Liberation Mono', monospace;">double</div>
<div class="t" style="left:361.66px;top:1222.63px;font-size:16.53px;color:#000000;font-weight:400;font-family:'Liberation Mono', monospace;">Signal_TakeLevel</div>
<div class="t" style="left:569.98px;top:1222.63px;font-size:16.53px;color:#000000;font-weight:400;font-family:'Liberation Mono', monospace;">=</div>
<div class="t" style="left:579.90px;top:1222.63px;font-size:16.53px;color:#008000;font-weight:400;font-family:'Liberation Mono', monospace;">50.0</div>
<div class="t" style="left:619.58px;top:1222.63px;font-size:16.53px;color:#000000;font-weight:400;font-family:'Liberation Mono', monospace;">;</div>
<div class="t" style="left:708.86px;top:1222.63px;font-size:16.53px;color:#000000;font-weight:400;font-family:'Liberation Mono', monospace;">// Take Profit level (in points)</div>
<div style="position:absolute;left:27px;top:1246px;width:1446px;height:42px;background:#e4e4e7;border-radius:0 0 5px 5px"></div>
<svg style="position:absolute;left:90.2px;top:1255.2px;" width="24" height="24" viewBox="0 0 16 16"><path fill="#3f3f46" d="m8.177 14.323 2.896-2.896a.25.25 0 0 0-.177-.427H8.75V7.764a.75.75 0 1 0-1.5 0V11H5.104a.25.25 0 0 0-.177.427l2.896 2.896a.25.25 0 0 0 .354 0ZM2.25 5a.75.75 0 0 0 0-1.5h-.5a.75.75 0 0 0 0 1.5h.5ZM6 4.25a.75.75 0 0 1-.75.75h-.5a.75.75 0 0 1 0-1.5h.5a.75.75 0 0 1 .75.75ZM8.25 5a.75.75 0 0 0 0-1.5h-.5a.75.75 0 0 0 0 1.5h.5ZM12 4.25a.75.75 0 0 1-.75.75h-.5a.75.75 0 0 1 0-1.5h.5a.75.75 0 0 1 .75.75Zm2.25.75a.75.75 0 0 0 0-1.5h-.5a.75.75 0 0 0 0 1.5h.5Z"/></svg>
</body></html>
